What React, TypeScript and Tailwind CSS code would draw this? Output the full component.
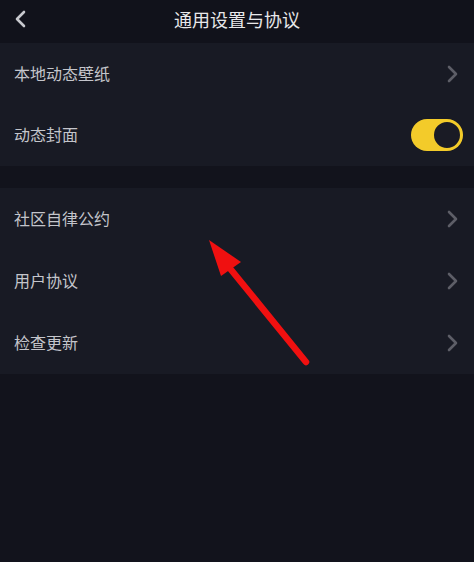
import React from "react";

const Chevron = () => (
  <svg width="14" height="20" viewBox="0 0 14 20" className="shrink-0">
    <path d="M3 3 L10 10 L3 17" fill="none" stroke="#5d5e67" strokeWidth="2.6" strokeLinecap="round" strokeLinejoin="round" />
  </svg>
);

const Row = ({ label, right }: { label: string; right?: React.ReactNode }) => (
  <div className="h-[62px] flex items-center justify-between pl-[14px] pr-[14px]">
    <span className="text-[16px] text-[#c4c5cb] -mt-[2px]">{label}</span>
    {right ?? <Chevron />}
  </div>
);

const Toggle = () => (
  <div className="w-[52px] h-[32px] rounded-full bg-[#f3cb2a] flex items-center justify-end pr-[1px] -mr-[3px]">
    <div className="w-[30px] h-[30px] rounded-full bg-[#1a1b25] border-[2px] border-[#f3cb2a]" />
  </div>
);

export default function App() {
  return (
    <div
      className="relative w-[474px] h-[562px] bg-[#12131c] overflow-hidden"
      style={{ fontFamily: '"Noto Sans CJK SC", "Noto Sans", sans-serif' }}
    >
      <div className="h-[43px] bg-[#11121b] flex items-center relative">
        <svg width="14" height="20" viewBox="0 0 14 20" className="absolute left-[14px] top-[9px]">
          <path d="M10 3 L3 10 L10 17" fill="none" stroke="#c8c9ce" strokeWidth="2.6" strokeLinecap="round" strokeLinejoin="round" />
        </svg>
        <div className="w-full text-center text-[18px] text-[#e8e8ea] -mt-[5px]">通用设置与协议</div>
      </div>
      <div className="bg-[#181a24] flex flex-col h-[123px] [&>div]:h-[61.5px]">
        <Row label="本地动态壁纸" />
        <Row label="动态封面" right={<Toggle />} />
      </div>
      <div className="h-[22px]" />
      <div className="bg-[#181a24]">
        <Row label="社区自律公约" />
        <Row label="用户协议" />
        <Row label="检查更新" />
      </div>
      <svg width="474" height="562" className="absolute inset-0 pointer-events-none">
        <line x1="306" y1="362" x2="228" y2="266" stroke="#f01010" strokeWidth="6.5" strokeLinecap="round" />
        <polygon points="209,240 221,276 241,262" fill="#f01010" />
      </svg>
    </div>
  );
}
